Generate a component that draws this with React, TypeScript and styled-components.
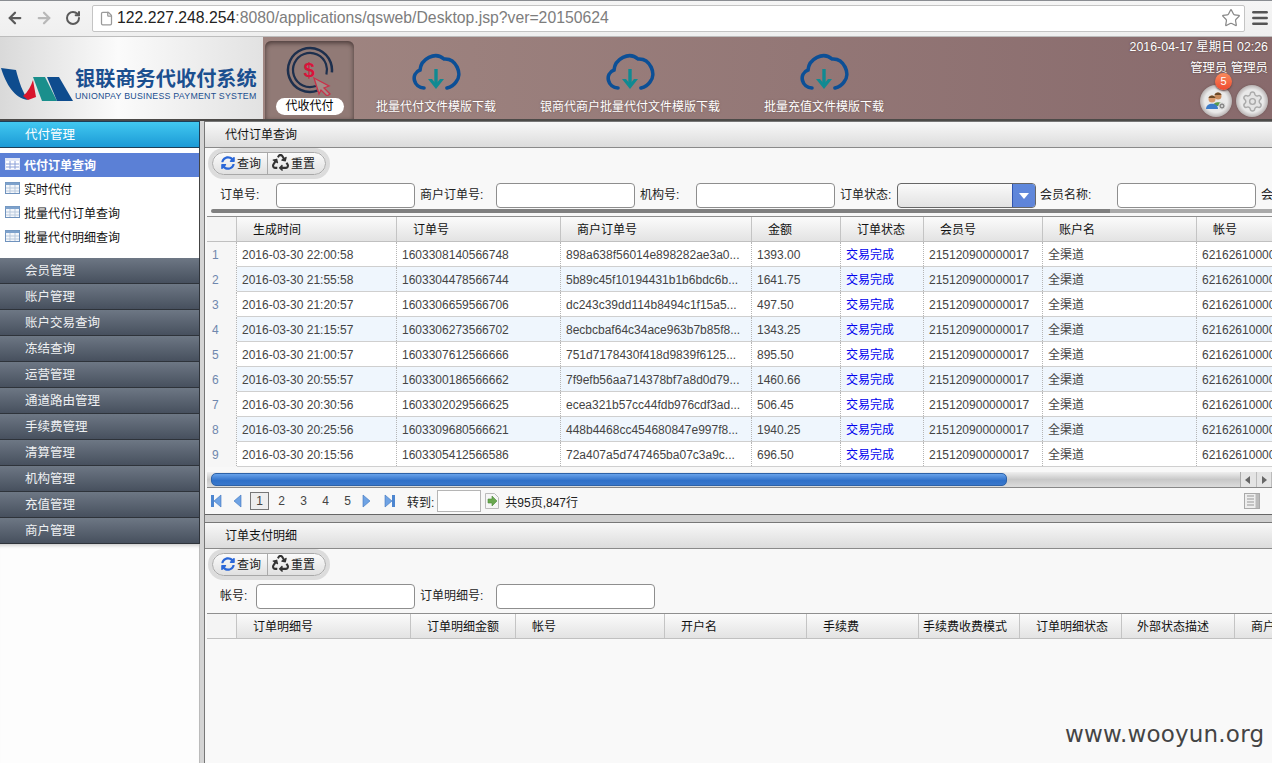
import styled, { createGlobalStyle } from "styled-components";
import { ArrowLeft, ArrowRight, RotateCw, File, Star, Menu, Settings } from "lucide-react";
import { FaRecycle, FaSyncAlt } from "react-icons/fa";

const GlobalStyle = createGlobalStyle`
  html, body {
    margin: 0;
    padding: 0;
    height: 100%;
    overflow: hidden;
    background: #fff;
  }
  body, input {
    font-family: "Liberation Sans", "Noto Sans CJK SC", sans-serif;
    font-size: 12px;
    color: #222;
  }
  * { box-sizing: border-box; }
`;

const Page = styled.div`
  width: 1272px;
  height: 763px;
  display: flex;
  flex-direction: column;
  overflow: hidden;
`;

/* browser chrome */
const BrowserBar = styled.div`
  height: 37px;
  flex: none;
  display: flex;
  align-items: center;
  padding-bottom: 1px;
  background: linear-gradient(#f5f5f5, #efefef);
  border-top: 1px solid #8a8d92;
  border-bottom: 1px solid #bdbdbd;
`;

const NavGlyph = styled.span<{ $off?: boolean }>`
  width: 29px;
  display: flex;
  justify-content: center;
  color: ${(p) => (p.$off ? "#b8b8b8" : "#5a5a5a")};
`;

const UrlBox = styled.div`
  flex: 1;
  height: 27px;
  margin-left: 5px;
  display: flex;
  align-items: center;
  padding: 0 3px 0 6px;
  background: #fff;
  border: 1px solid #c4c4c4;
  border-radius: 2px;
  font-size: 15.75px;
  color: #7d7d7d;
  white-space: nowrap;
  svg { flex: none; }
  b { font-weight: 400; color: #222; }
`;

const UrlText = styled.span`
  flex: 1;
  margin-left: 3px;
`;

const MenuGlyph = styled.span`
  width: 27px;
  padding-left: 3px;
  display: flex;
  justify-content: center;
  color: #555;
`;

/* app header */
const Header = styled.header`
  height: 84px;
  flex: none;
  display: flex;
  background: linear-gradient(90deg, #a68d87, #886a6c);
  border-bottom: 2px solid #4c4a48;
`;

const LogoBlock = styled.div`
  width: 263px;
  flex: none;
  display: flex;
  align-items: center;
  padding-top: 13px;
  background: linear-gradient(90deg, #d9d9d9, #fbfbfb 45%, #e2e2e2);
`;

const LogoText = styled.div`
  margin-left: 1px;
  color: #1b4f8f;
  white-space: nowrap;
`;

const LogoTitle = styled.div`
  font-size: 20.2px;
  line-height: 24px;
  font-weight: 700;
`;

const LogoSub = styled.div`
  font-size: 8.8px;
  line-height: 11px;
  letter-spacing: 0.25px;
`;

const TabStrip = styled.nav`
  display: flex;
  padding: 4px 0 0 2px;
`;

const Tab = styled.div<{ $active?: boolean }>`
  width: ${(p) => (p.$active ? "89px" : "auto")};
  padding: ${(p) => (p.$active ? "5px 0 0" : "11px 22px 0")};
  display: flex;
  flex-direction: column;
  align-items: center;
  border-radius: 6px 6px 0 0;
  background: ${(p) => (p.$active ? "#917a76" : "transparent")};
  box-shadow: ${(p) => (p.$active ? "inset 0 2px 5px #4a3a38" : "none")};
`;

const TabLabel = styled.div<{ $active?: boolean }>`
  margin-top: ${(p) => (p.$active ? "2px" : "7px")};
  width: ${(p) => (p.$active ? "68px" : "auto")};
  height: 17px;
  line-height: 17px;
  text-align: center;
  white-space: nowrap;
  border-radius: 9px;
  color: ${(p) => (p.$active ? "#000" : "#fff")};
  background: ${(p) => (p.$active ? "#fff" : "transparent")};
  text-shadow: ${(p) => (p.$active ? "none" : "0 0 2px #6a5250")};
`;

const HeaderRight = styled.div`
  margin-left: auto;
  padding: 2px 4px 0 0;
  display: flex;
  flex-direction: column;
  align-items: flex-end;
  color: #fff;
  font-size: 12.4px;
  text-shadow: 0 0 2px #4a3634;
`;

const HeaderLine = styled.div`
  line-height: 16px;
  white-space: nowrap;
  margin-bottom: 5px;
`;

const RoundButtons = styled.div`
  display: flex;
  gap: 4px;
  margin-top: 4px;
`;

const RoundButton = styled.div`
  position: relative;
  width: 32px;
  height: 32px;
  border-radius: 50%;
  display: flex;
  align-items: center;
  justify-content: center;
  background: radial-gradient(circle, #e9e9e9 50%, #b4aeae 72%, #dcdada 100%);
  box-shadow: 0 0 2px #6a5250;
`;

const Badge = styled.span`
  position: absolute;
  top: -12px;
  left: 15px;
  width: 17px;
  height: 17px;
  border-radius: 50%;
  background: linear-gradient(#f98a5c, #ee4a30);
  box-shadow: 0 1px 2px #5a3a38;
  color: #fff;
  font-size: 11px;
  line-height: 17px;
  text-align: center;
  text-shadow: none;
`;

/* body */
const Body = styled.div`
  flex: 1;
  min-height: 0;
  display: flex;
`;

const Sidebar = styled.aside`
  width: 200px;
  flex: none;
  display: flex;
  flex-direction: column;
  background: #fff;
`;

const SideHead = styled.div`
  height: 27px;
  line-height: 26px;
  padding-left: 25px;
  color: #fff;
  font-size: 12.5px;
  background: linear-gradient(#41c8f0, #1c9ad6);
  border: 1px solid #1d3f58;
  border-left: none;
`;

const SideList = styled.div`
  height: 110px;
  padding-top: 5px;
  border-right: 1px solid #444;
`;

const SideItem = styled.div<{ $active?: boolean }>`
  height: 24px;
  display: flex;
  align-items: center;
  gap: 4px;
  padding: 0 0 2px 5px;
  font-weight: ${(p) => (p.$active ? 700 : 400)};
  color: ${(p) => (p.$active ? "#fff" : "#111")};
  background: ${(p) => (p.$active ? "#5b80d6" : "transparent")};
`;

const SideGroup = styled.div`
  height: 26px;
  line-height: 27px;
  padding-left: 25px;
  color: #eef0f2;
  font-size: 12.5px;
  background: linear-gradient(#6d7784, #47505e);
  border-right: 1px solid #2e333a;
  border-bottom: 1px solid #2e333a;
`;

const SideRest = styled.div`
  flex: 1;
  background: #fdfdfd;
  border-right: 1px solid #bbb;
  box-shadow: inset 0 5px 4px -4px #bbb;
`;

const Splitter = styled.div`
  width: 5px;
  flex: none;
  background: #d4d4d4;
  border-right: 1px solid #777;
`;

const Main = styled.main`
  flex: 1;
  min-width: 0;
  display: flex;
  flex-direction: column;
  gap: 7px;
  background: #cfcfcf;
`;

const Panel = styled.section<{ $grow?: boolean }>`
  height: ${(p) => (p.$grow ? "auto" : "394px")};
  flex: ${(p) => (p.$grow ? 1 : "none")};
  min-height: 0;
  display: flex;
  flex-direction: column;
  overflow: hidden;
  background: #f8f8f8;
  border-top: 1px solid #777;
  border-bottom: ${(p) => (p.$grow ? "none" : "1px solid #666")};
`;

const PanelTitle = styled.div`
  height: 26px;
  flex: none;
  line-height: 26px;
  padding-left: 20px;
  color: #111;
  background: linear-gradient(#f8f8f8, #dcdcdc);
  border-bottom: 1px solid #8a8a8a;
`;

const Toolbar = styled.div`
  height: 31px;
  flex: none;
  padding-left: 7px;
  display: flex;
  align-items: center;
`;

const ButtonPill = styled.div`
  display: flex;
  height: 23px;
  border: 1px solid #a8a8a8;
  border-radius: 12px;
  background: linear-gradient(#fbfbfb, #e0e0e0);
  box-shadow: 0 0 0 4px #dcdcdc;
`;

const ToolButton = styled.div<{ $first?: boolean }>`
  display: flex;
  align-items: center;
  gap: 2px;
  padding: ${(p) => (p.$first ? "0 6px 2px 8px" : "0 10px 2px 4px")};
  border-right: ${(p) => (p.$first ? "1px solid #aaa" : "none")};
  color: #222;
  white-space: nowrap;
`;

const FormRow = styled.div`
  height: 30px;
  flex: none;
  display: flex;
  align-items: center;
  padding: 2px 0 0 15px;
  white-space: nowrap;
`;

const FieldLabel = styled.label<{ $w: number }>`
  width: ${(p) => p.$w}px;
  flex: none;
  margin-bottom: 4px;
`;

const TextInput = styled.input<{ $w?: number }>`
  width: ${(p) => p.$w ?? 139}px;
  height: 25px;
  flex: none;
  margin-right: 5px;
  border: 1px solid #8e8e8e;
  border-radius: 4px;
  background: #fff;
`;

const SelectBox = styled.div`
  width: 139px;
  height: 25px;
  flex: none;
  margin-right: 4px;
  display: flex;
  justify-content: flex-end;
  border: 1px solid #666;
  border-radius: 4px;
  overflow: hidden;
  background: linear-gradient(#fafafa, #e2e2e2);
`;

const SelectArrow = styled.div`
  width: 23px;
  display: flex;
  align-items: center;
  justify-content: center;
  background: linear-gradient(#5f88dc, #5f84d8);
  border-left: 1px solid #2f55b0;
  &::after {
    content: "";
    border: 5px solid transparent;
    border-top: 6px solid #fff;
    margin-top: 6px;
  }
`;

const FormScroll = styled.div`
  height: 4px;
  flex: none;
  margin: 0 0 0 6px;
  border-radius: 2px 0 0 2px;
  background: linear-gradient(90deg, #808080 0 899px, #aaa 899px);
`;

const Grid = styled.div<{ $grow?: boolean }>`
  margin: 3px 0 0 2px;
  flex: ${(p) => (p.$grow ? 1 : "none")};
  overflow: hidden;
  border-top: 1px solid #8f8f8f;
  background: ${(p) => (p.$grow ? "#f9f9f9" : "#fff")};
`;

const Row = styled.div<{ $cols: string; $head?: boolean; $alt?: boolean }>`
  display: grid;
  grid-template-columns: ${(p) => p.$cols};
  height: 25px;
  width: 1300px;
  line-height: 26px;
  border-bottom: 1px solid ${(p) => (p.$head ? "#c0c0c0" : "#cfcfcf")};
  background: ${(p) =>
    p.$head
      ? "linear-gradient(#fbfbfb, #e3e3e3)"
      : p.$alt
      ? "#eff6fd"
      : "#fff"};
`;

const HeadCell = styled.div<{ $pad?: number }>`
  padding-left: ${(p) => p.$pad ?? 16}px;
  border-right: 1px solid #c4c4c4;
  white-space: nowrap;
  overflow: hidden;
  color: #111;
`;

const Cell = styled.div<{ $link?: boolean }>`
  padding-left: 5px;
  border-right: 1px dotted #b5b5b5;
  white-space: nowrap;
  overflow: hidden;
  color: ${(p) => (p.$link ? "#0000ee" : "#444")};
`;

const RowNum = styled.div`
  padding-left: 5px;
  border-right: 1px dotted #b5b5b5;
  color: #6f87ad;
  background: #f6f6f6;
`;

const CornerCell = styled.div`
  border-right: 1px solid #c4c4c4;
  background: #f4f4f4;
`;

const HScroll = styled.div`
  height: 16px;
  flex: none;
  margin: 5px 0 0 2px;
  display: flex;
  border-bottom: 1px solid #888;
  background: linear-gradient(#efefef, #c8c8c8 50%, #dcdcdc);
`;

const HThumb = styled.div`
  width: 796px;
  margin: 1px 0 0 4px;
  height: 13px;
  border-radius: 5px;
  border: 1px solid #2d62a8;
  background: linear-gradient(#68a2ea, #2f70c8 60%, #3a78cc);
`;

const HArrows = styled.div`
  margin-left: auto;
  width: 32px;
  display: flex;
  background: #e4e4e4;
  border-left: 1px solid #aaa;
`;

const HArrow = styled.div<{ $right?: boolean }>`
  flex: 1;
  display: flex;
  align-items: center;
  justify-content: center;
  border-right: 1px solid #bbb;
  &::after {
    content: "";
    border: 4px solid transparent;
    ${(p) =>
      p.$right
        ? "border-left: 5px solid #666; margin-left: 5px;"
        : "border-right: 5px solid #666; margin-right: 5px;"}
  }
`;

const Pager = styled.div`
  flex: 1;
  display: flex;
  align-items: center;
  padding: 0 12px 0 5px;
  white-space: nowrap;
`;

const PageIcon = styled.svg<{ $gap?: number }>`
  width: 12px;
  height: 14px;
  flex: none;
  margin-right: ${(p) => p.$gap ?? 11}px;
`;

const PageNum = styled.span<{ $active?: boolean }>`
  width: 19px;
  height: 18px;
  flex: none;
  margin-right: 3px;
  line-height: 16px;
  text-align: center;
  color: #444;
  border: 1px solid ${(p) => (p.$active ? "#777" : "transparent")};
  background: ${(p) => (p.$active ? "#eee" : "transparent")};
`;

const JumpInput = styled.input`
  width: 44px;
  height: 22px;
  margin: 0 3px;
  border: 1px solid #b5b5b5;
  background: #fff;
`;

const GoIcon = styled.svg`
  flex: none;
  margin-right: 5px;
`;

const ColumnPicker = styled.svg`
  margin-left: auto;
`;

const Watermark = styled.div`
  position: absolute;
  left: 1065px;
  top: 718px;
  font-family: "DejaVu Sans", sans-serif;
  font-size: 23px;
  line-height: 32px;
  color: #444;
  letter-spacing: 0.2px;
`;

const TOP_COLS = "30px 160px 164px 191px 89px 83px 119px 154px 1fr";
const BOTTOM_COLS = "30px 174px 105px 149px 142px 112px 101px 102px 113px 1fr";

const ORDERS = [
  ["2016-03-30 22:00:58", "1603308140566748", "898a638f56014e898282ae3a0...", "1393.00"],
  ["2016-03-30 21:55:58", "1603304478566744", "5b89c45f10194431b1b6bdc6b...", "1641.75"],
  ["2016-03-30 21:20:57", "1603306659566706", "dc243c39dd114b8494c1f15a5...", "497.50"],
  ["2016-03-30 21:15:57", "1603306273566702", "8ecbcbaf64c34ace963b7b85f8...", "1343.25"],
  ["2016-03-30 21:00:57", "1603307612566666", "751d7178430f418d9839f6125...", "895.50"],
  ["2016-03-30 20:55:57", "1603300186566662", "7f9efb56aa714378bf7a8d0d79...", "1460.66"],
  ["2016-03-30 20:30:56", "1603302029566625", "ecea321b57cc44fdb976cdf3ad...", "506.45"],
  ["2016-03-30 20:25:56", "1603309680566621", "448b4468cc454680847e997f8...", "1940.25"],
  ["2016-03-30 20:15:56", "1603305412566586", "72a407a5d747465ba07c3a9c...", "696.50"],
];

const SIDE_ITEMS = ["代付订单查询", "实时代付", "批量代付订单查询", "批量代付明细查询"];
const SIDE_GROUPS = [
  "会员管理", "账户管理", "账户交易查询", "冻结查询", "运营管理", "通道路由管理",
  "手续费管理", "清算管理", "机构管理", "充值管理", "商户管理",
];
const TOP_HEADS: [string, number][] = [
  ["生成时间", 16], ["订单号", 16], ["商户订单号", 16], ["金额", 16],
  ["订单状态", 16], ["会员号", 16], ["账户名", 16], ["帐号", 16],
];
const BOTTOM_HEADS: [string, number][] = [
  ["订单明细号", 16], ["订单明细金额", 16], ["帐号", 16], ["开户名", 16], ["手续费", 16],
  ["手续费收费模式", 4], ["订单明细状态", 16], ["外部状态描述", 15], ["商户", 16],
];

const LogoMark = () => (
  <svg width="74" height="38" viewBox="0 0 74 38" style={{ flex: "none" }}>
    <path d="M1 2 L16 4 C19 16 23 27 28 34 C14 32 6 18 1 2Z" fill="#0e4c8e" />
    <path d="M33 14 L36 31 L28 34 L23 30 C28 26 31 20 33 14Z" fill="#d8142c" />
    <path d="M33 11 L45 11 L57 35 L42 35Z" fill="#1a8f8c" />
    <path d="M47 11 L59 11 L73 35 L57 35Z" fill="#0e4c8e" />
  </svg>
);

const CloudIcon = () => (
  <svg width="50" height="40" viewBox="0 0 50 40" fill="none">
    <path
      d="M13 36 C3 36 -1 22 9 18 C10 7 24 -1 33 7 C45 6 52 22 45 30 C43 33 40 35 36 36"
      stroke="#0c4f96"
      strokeWidth="3.6"
      strokeLinecap="round"
    />
    <path d="M25 17 V33" stroke="#108a92" strokeWidth="3.4" />
    <path d="M17 27 L25 37 L33 27 L29 27 L25 32 L21 27Z" fill="#108a92" />
  </svg>
);

const PayIcon = () => (
  <svg width="50" height="50" viewBox="0 0 50 50" fill="none">
    <circle cx="25" cy="24" r="22" stroke="#1d2f4d" strokeWidth="2.5" strokeDasharray="113 25" transform="rotate(70 25 24)" />
    <circle cx="25" cy="24" r="17" stroke="#1d2f4d" strokeWidth="2.2" strokeDasharray="90 17" transform="rotate(70 25 24)" />
    <text x="24" y="31" textAnchor="middle" fontSize="20" fontWeight="700" fill="#d8143a" fontFamily="Liberation Sans">$</text>
    <path d="M29 32 L44 40 L39 42 L45 48 L42 50 L36 44 L34 48Z" fill="#a58d88" stroke="#c8314a" strokeWidth="1.3" />
  </svg>
);

const UsersIcon = () => (
  <svg width="22" height="20" viewBox="0 0 22 20">
    <circle cx="13" cy="5" r="3.5" fill="#c98b5c" />
    <path d="M9.5 4 C10 0.5 16 0.5 16.5 4Z" fill="#6b4a2a" />
    <path d="M8 15 C8 10 18 10 18 15Z" fill="#5a9a4a" />
    <circle cx="7" cy="8" r="3.5" fill="#d99a6c" />
    <path d="M3.5 7 C4 3.5 10 3.5 10.5 7Z" fill="#6b4a2a" />
    <path d="M1 18 C1 11 13 11 13 18Z" fill="#3d7cc9" />
    <circle cx="17" cy="15" r="3.2" fill="#8a8a8a" stroke="#e8e8e8" />
    <circle cx="17" cy="15" r="1" fill="#e8e8e8" />
  </svg>
);

const TableIcon = ({ $active }: { $active?: boolean }) => (
  <svg width="15" height="12" viewBox="0 0 15 12" style={{ flex: "none" }}>
    <rect x="0.5" y="0.5" width="14" height="11" fill={$active ? "#fff" : "#f4f7fb"} stroke={$active ? "#dfe6f7" : "#6f92bd"} />
    <rect x="0.5" y="0.5" width="14" height="2.5" fill={$active ? "#dfe6f7" : "#7ea2cc"} />
    <path d="M1 6h13M1 9h13M5 3v8M10 3v8" stroke={$active ? "#8aa0d8" : "#b9c9dd"} strokeWidth="1" />
  </svg>
);

const First = () => (
  <PageIcon $gap={10} viewBox="0 0 12 14">
    <path d="M1 1h3v12H1z" fill="#4d86d0" />
    <path d="M11 1v12L4 7z" fill="#6fa3e4" stroke="#3d73bd" strokeWidth="0.6" />
  </PageIcon>
);
const Prev = () => (
  <PageIcon $gap={6} viewBox="0 0 12 14">
    <path d="M9 1v12L2 7z" fill="#6fa3e4" stroke="#3d73bd" strokeWidth="0.6" />
  </PageIcon>
);
const Next = () => (
  <PageIcon $gap={12} viewBox="0 0 12 14">
    <path d="M3 1v12l7-6z" fill="#6fa3e4" stroke="#3d73bd" strokeWidth="0.6" />
  </PageIcon>
);
const Last = () => (
  <PageIcon $gap={11} viewBox="0 0 12 14">
    <path d="M1 1v12l7-6z" fill="#6fa3e4" stroke="#3d73bd" strokeWidth="0.6" />
    <path d="M8 1h3v12H8z" fill="#4d86d0" />
  </PageIcon>
);

const Buttons = () => (
  <Toolbar>
    <ButtonPill>
      <ToolButton $first>
        <FaSyncAlt size={14} color="#2a67d8" />
        查询
      </ToolButton>
      <ToolButton>
        <FaRecycle size={17} color="#333" />
        重置
      </ToolButton>
    </ButtonPill>
  </Toolbar>
);

export default function App() {
  return (
    <Page>
      <GlobalStyle />
      <BrowserBar>
        <NavGlyph><ArrowLeft size={18} strokeWidth={3} /></NavGlyph>
        <NavGlyph $off><ArrowRight size={18} strokeWidth={3} /></NavGlyph>
        <NavGlyph><RotateCw size={16} strokeWidth={3} /></NavGlyph>
        <UrlBox>
          <File size={15} color="#999" />
          <UrlText><b>122.227.248.254</b>:8080/applications/qsweb/Desktop.jsp?ver=20150624</UrlText>
          <Star size={20} strokeWidth={1.5} color="#888" />
        </UrlBox>
        <MenuGlyph><Menu size={20} strokeWidth={3} /></MenuGlyph>
      </BrowserBar>

      <Header>
        <LogoBlock>
          <LogoMark />
          <LogoText>
            <LogoTitle>银联商务代收付系统</LogoTitle>
            <LogoSub>UNIONPAY BUSINESS PAYMENT SYSTEM</LogoSub>
          </LogoText>
        </LogoBlock>
        <TabStrip>
          <Tab $active>
            <PayIcon />
            <TabLabel $active>代收代付</TabLabel>
          </Tab>
          <Tab>
            <CloudIcon />
            <TabLabel>批量代付文件模版下载</TabLabel>
          </Tab>
          <Tab>
            <CloudIcon />
            <TabLabel>银商代商户批量代付文件模版下载</TabLabel>
          </Tab>
          <Tab>
            <CloudIcon />
            <TabLabel>批量充值文件模版下载</TabLabel>
          </Tab>
        </TabStrip>
        <HeaderRight>
          <HeaderLine>2016-04-17 星期日 02:26</HeaderLine>
          <HeaderLine>管理员 管理员</HeaderLine>
          <RoundButtons>
            <RoundButton>
              <UsersIcon />
              <Badge>5</Badge>
            </RoundButton>
            <RoundButton>
              <Settings size={23} color="#aaa" fill="#e4e4e4" strokeWidth={1.5} />
            </RoundButton>
          </RoundButtons>
        </HeaderRight>
      </Header>

      <Body>
        <Sidebar>
          <SideHead>代付管理</SideHead>
          <SideList>
            {SIDE_ITEMS.map((item, i) => (
              <SideItem key={item} $active={i === 0}>
                <TableIcon $active={i === 0} />
                {item}
              </SideItem>
            ))}
          </SideList>
          {SIDE_GROUPS.map((g) => (
            <SideGroup key={g}>{g}</SideGroup>
          ))}
          <SideRest />
        </Sidebar>
        <Splitter />
        <Main>
          <Panel>
            <PanelTitle>代付订单查询</PanelTitle>
            <Buttons />
            <FormRow>
              <FieldLabel $w={56}>订单号:</FieldLabel>
              <TextInput />
              <FieldLabel $w={76}>商户订单号:</FieldLabel>
              <TextInput />
              <FieldLabel $w={56}>机构号:</FieldLabel>
              <TextInput />
              <FieldLabel $w={57}>订单状态:</FieldLabel>
              <SelectBox><SelectArrow /></SelectBox>
              <FieldLabel $w={77}>会员名称:</FieldLabel>
              <TextInput />
              <FieldLabel $w={20}>会员</FieldLabel>
            </FormRow>
            <FormScroll />
            <Grid>
              <Row $cols={TOP_COLS} $head>
                <CornerCell />
                {TOP_HEADS.map(([h, pad]) => (
                  <HeadCell key={h} $pad={pad}>{h}</HeadCell>
                ))}
              </Row>
              {ORDERS.map((o, i) => (
                <Row key={o[1]} $cols={TOP_COLS} $alt={i % 2 === 1}>
                  <RowNum>{i + 1}</RowNum>
                  {o.map((v) => (
                    <Cell key={v}>{v}</Cell>
                  ))}
                  <Cell $link>交易完成</Cell>
                  <Cell>215120900000017</Cell>
                  <Cell>全渠道</Cell>
                  <Cell>6216261000000000</Cell>
                </Row>
              ))}
            </Grid>
            <HScroll>
              <HThumb />
              <HArrows>
                <HArrow />
                <HArrow $right />
              </HArrows>
            </HScroll>
            <Pager>
              <First />
              <Prev />
              <PageNum $active>1</PageNum>
              <PageNum>2</PageNum>
              <PageNum>3</PageNum>
              <PageNum>4</PageNum>
              <PageNum>5</PageNum>
              <Next />
              <Last />
              转到:
              <JumpInput />
              <GoIcon width="16" height="18" viewBox="0 0 16 18">
                <path d="M1.5 1.5h9l4 4v11h-13z" fill="#f6f6f6" stroke="#bbb" />
                <path d="M4 7h4V4l5 5-5 5v-3H4z" fill="#6aa84f" stroke="#4a8a3a" strokeWidth="0.6" />
              </GoIcon>
              共95页,847行
              <ColumnPicker width="16" height="16" viewBox="0 0 16 16">
                <rect x="0.5" y="0.5" width="15" height="15" fill="#eee" stroke="#aaa" />
                <path d="M3 3h7M3 6h7M3 9h7M3 12h7" stroke="#999" />
                <rect x="11.5" y="1" width="3.5" height="14" fill="#bbb" />
              </ColumnPicker>
            </Pager>
          </Panel>

          <Panel $grow>
            <PanelTitle>订单支付明细</PanelTitle>
            <Buttons />
            <FormRow>
              <FieldLabel $w={36}>帐号:</FieldLabel>
              <TextInput $w={159} />
              <FieldLabel $w={76}>订单明细号:</FieldLabel>
              <TextInput $w={159} />
            </FormRow>
            <Grid $grow>
              <Row $cols={BOTTOM_COLS} $head>
                <CornerCell />
                {BOTTOM_HEADS.map(([h, pad]) => (
                  <HeadCell key={h} $pad={pad}>{h}</HeadCell>
                ))}
              </Row>
            </Grid>
          </Panel>
        </Main>
      </Body>
      <Watermark>www.wooyun.org</Watermark>
    </Page>
  );
}
